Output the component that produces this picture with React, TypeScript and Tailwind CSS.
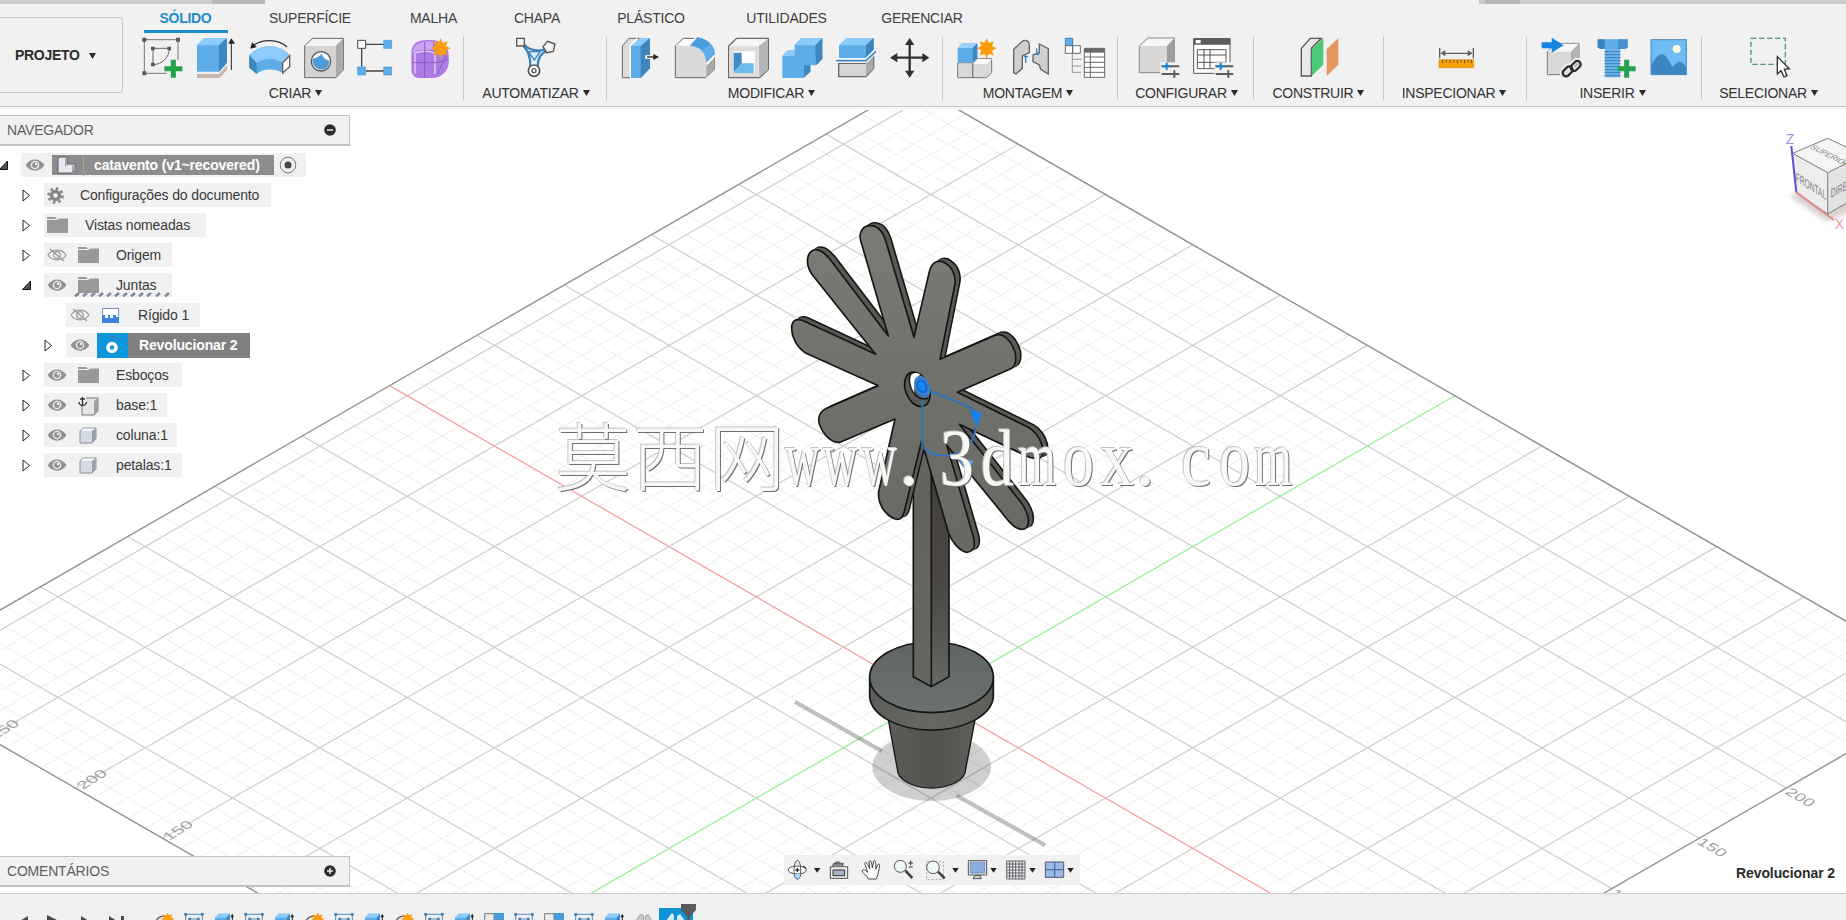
import clsx from "clsx";
import type { ReactNode } from "react";

const BLUE = "#5eade8";
const DARK_BLUE = "#3d86c0";
const GREY = "#686868";

type IconProps = { box: string; className?: string; children: ReactNode };

// Icons are drawn on a 3x grid, so a 54x44 cell is 162x132 units.
function Icon({ box, className = "h-[44px] w-[54px]", children }: IconProps) {
  return (
    <svg className={clsx("shrink-0", className)} fill="none" viewBox={box}>
      {children}
    </svg>
  );
}

function Star({ x, y, r = 30 }: { x: number; y: number; r?: number }) {
  const points = Array.from({ length: 16 }, (_, i) => {
    const radius = i % 2 ? r * 0.58 : r;
    const angle = (i * Math.PI) / 8;
    return `${x + radius * Math.sin(angle)},${y - radius * Math.cos(angle)}`;
  }).join(" ");
  return <polygon fill="#f99d0b" points={points} />;
}

function Plus({ x, y }: { x: number; y: number }) {
  return (
    <path d={`M${x - 27} ${y}H${x + 27}M${x} ${y - 27}V${y + 27}`} stroke="#25a14b" strokeWidth="15" />
  );
}

function Sliders({ x, y }: { x: number; y: number }) {
  return (
    <g transform={`translate(${x} ${y})`}>
      <path d="M-4 -12H56V36H-4z" fill="#f1f1f1" />
      <path d="M0 0H53M0 23H53M38 12V34" stroke="#5d5d5d" strokeWidth="6" />
      <path d="M0 0H28M15 -11V11" stroke="#1e80d0" strokeWidth="6" />
    </g>
  );
}

const createIcons = (
  <>
    <Icon box="399 111 162 132">
      <path d="M433 119H534V180M433 119V220H500" stroke="#777" strokeWidth="3" />
      <path d="M459 145H508C508 172 486 194 459 194z" stroke="#666" strokeWidth="3" />
      <path d="M427 113h12v12h-12zM528 113h12v12h-12zM427 214h12v12h-12zM453 140h11v11h-11zM502 140h11v11h-11zM453 188h11v11h-11z" fill="#62574f" />
      <Plus x={520} y={206} />
    </Icon>
    <Icon box="561 111 162 132">
      <path d="M591 222H657L681 196V210L658 234H591z" fill="#c9b5ab" />
      <path d="M591 136L612 114H681V188L657 215H591z" fill={BLUE} />
      <path d="M591 136L612 114H681L657 136z" fill="#8ccbfb" />
      <path d="M657 136L681 114V188L657 215z" fill={DARK_BLUE} />
      <path d="M694 210V122" stroke="#222" strokeWidth="3" />
      <path d="M685 131L694 115L705 131z" fill="#222" />
    </Icon>
    <Icon box="723 111 162 132">
      <path d="M748 165C780 130 838 130 869 165L848 188V218C820 205 790 205 770 222L748 203z" fill={BLUE} />
      <path d="M748 165C780 130 838 130 869 165L848 188C820 172 795 172 770 190z" fill="#8ccbfb" />
      <path d="M748 165L770 190V222L748 203z" fill={DARK_BLUE} />
      <path d="M848 188L869 167V200L848 219z" fill="#fff" stroke="#6b5a55" strokeWidth="4" />
      <path d="M861 141C835 116 785 116 758 138" stroke="#333" strokeWidth="4" />
      <path d="M751 146L756 127L770 141z" fill="#222" />
    </Icon>
    <Icon box="885 111 162 132">
      <path d="M914 137L938 115H1030V210L1008 233H914z" fill="#d4d4d4" stroke={GREY} strokeWidth="3" />
      <path d="M916 138L939 117H1028L1006 138z" fill="#f4f4f4" />
      <path d="M1008 137L1029 117V210L1008 232z" fill="#aaa" />
      <circle cx="963" cy="184" fill="#fff" r="29" stroke="#555" strokeWidth="4" />
      <path d="M937 177C950 173 962 169 964 160C968 172 976 180 988 182C988 220 937 217 937 177z" fill="#4d9bd8" />
    </Icon>
    <Icon box="1047 111 162 132">
      <path d="M1098 133H1152M1085 146V200M1098 213H1152" stroke="#444" strokeWidth="4" />
      <path d="M1073 121h24v24h-24z" fill="#fff" stroke="#444" strokeWidth="3" />
      <path d="M1151 121h24v24h-24zM1073 201h24v24h-24zM1151 201h24v24h-24z" fill={BLUE} stroke="#4d96cc" strokeWidth="2" />
    </Icon>
    <Icon box="1209 111 162 132">
      <path d="M1234 155C1236 130 1255 119 1285 120C1325 118 1346 140 1346 165V190C1345 212 1325 233 1300 234H1258C1240 234 1234 222 1234 205z" fill="#ad7be4" />
      <path d="M1237 155C1245 130 1265 122 1298 124L1300 150C1275 146 1250 148 1237 160z" fill="#caa5f4" />
      <path d="M1245 222V160C1265 150 1290 152 1305 160V222" stroke="#e3d3f7" strokeWidth="4" />
      <path d="M1274 125V232M1236 188H1310L1346 178M1312 222L1340 165" stroke="#8a5ac2" strokeWidth="3" />
      <Star x={1322} y={145} />
    </Icon>
  </>
);

const automateIcons = (
  <Icon box="144 111 162 132">
    <path d="M190 130C205 152 240 158 262 145M190 138C210 158 212 180 211 200M262 152C240 160 233 180 233 200" stroke="#3b82bb" strokeWidth="7" />
    <path d="M205 155H240L223 180z" fill="#d5eafa" stroke="#3b82bb" strokeWidth="4" />
    <path d="M170 115h23v23h-23zM249 140L263 124L285 132L280 154L260 158z" fill="#f4f4f4" stroke="#555" strokeWidth="4" />
    <circle cx="222" cy="212" fill="#fff" r="17" stroke="#555" strokeWidth="5" />
    <circle cx="222" cy="212" r="6" stroke="#555" strokeWidth="4" />
  </Icon>
);

const modifyIcons = (
  <>
    <Icon box="456 111 162 132">
      <path d="M487 138L507 115H545L515 138V233H487z" fill="#ddd" stroke={GREY} strokeWidth="3" />
      <path d="M509 135L532 112V236H509z" fill="#fff" />
      <path d="M513 138L540 114H570V205L542 234H513z" fill={BLUE} />
      <path d="M513 138L540 114H570L542 138z" fill="#8ccbfb" />
      <path d="M542 138L570 114V205L542 234z" fill={DARK_BLUE} />
      <path d="M556 171H582" stroke="#fff" strokeWidth="11" />
      <path d="M561 171H582" stroke="#222" strokeWidth="4" />
      <path d="M580 162L597 171L580 180z" fill="#222" />
    </Icon>
    <Icon box="618 111 162 132">
      <path d="M646 138L670 115H700L763 170V208L737 233H646z" fill="#dadada" stroke={GREY} strokeWidth="3" />
      <path d="M648 137L671 117H712L690 137z" fill="#fff" />
      <path d="M739 197L763 174V207L739 231z" fill="#aaa" />
      <path d="M690 137L712 112C752 118 768 145 765 168L740 192C738 160 722 139 690 137z" fill={BLUE} />
      <path d="M740 192L765 166" stroke="#fff" strokeWidth="6" />
      <path d="M690 137L712 112C730 115 742 122 750 134L727 150C716 140 704 138 690 137z" fill="#4b9ede" />
    </Icon>
    <Icon box="780 111 162 132">
      <path d="M806 138L830 115H925V208L899 233H806z" fill="#f5f5f5" stroke={GREY} strokeWidth="4" />
      <path d="M896 138L924 117V208L898 232z" fill="#b5b5b5" />
      <path d="M808 139H896V231H808z" fill="#dcdcdc" />
      <path d="M821 154H884V219H821z" fill="#fff" />
      <path d="M821 158H845V190L821 218z" fill="#3f89c4" />
      <path d="M845 190H881V219H821z" fill="#6fbaf0" />
    </Icon>
    <Icon box="942 111 162 132">
      <path d="M967 168L984 151H1004V136L1024 114H1087V177L1068 196H1051V215L1030 234H967z" fill={BLUE} />
      <path d="M1066 136L1087 114V177L1068 196zM1032 196H1051V215L1032 233z" fill={DARK_BLUE} />
      <path d="M1006 136L1024 114H1087L1066 136zM967 168L984 151H1004V168z" fill="#8ccbfb" />
    </Icon>
    <Icon box="1104 111 162 132">
      <path d="M1136 190H1216L1241 166V205L1218 230H1136z" fill="#d7d7d7" stroke={GREY} strokeWidth="4" />
      <path d="M1218 192L1240 168V205L1218 228z" fill="#aaa" />
      <path d="M1137 136L1160 114H1241V150L1218 174H1137z" fill={BLUE} />
      <path d="M1137 136L1160 114H1241L1218 136z" fill="#8ccbfb" />
      <path d="M1218 136L1241 114V150L1218 174z" fill={DARK_BLUE} />
      <path d="M1128 182H1218L1248 152" stroke="#fff" strokeWidth="13" />
      <path d="M1128 182H1218L1248 154" stroke="#3d86c0" strokeWidth="5" />
    </Icon>
    <Icon box="1266 111 162 132">
      <path d="M1300 173H1398M1349 125V222" stroke="#303030" strokeWidth="7" />
      <path d="M1349 114L1363 135H1335zM1349 233L1363 212H1335zM1290 173L1312 159V187zM1408 173L1387 159V187z" fill="#303030" />
    </Icon>
  </>
);

const assemblyIcons = (
  <>
    <Icon box="27 111 162 132">
      <path d="M53 188H98V233H53zM98 193L113 176H155V218L140 233H98z" fill="#d9d9d9" stroke="#777" strokeWidth="3" />
      <path d="M99 192L113 177H155L141 192z" fill="#f7f7f7" />
      <path d="M53 144L66 130H112V175L98 188H53z" fill={BLUE} />
      <path d="M53 144L66 130H112L98 144z" fill="#9bd2fc" />
      <path d="M98 144L112 130V175L98 188z" fill={DARK_BLUE} />
      <Star x={140} y={145} />
    </Icon>
    <Icon box="189 111 162 132">
      <path d="M221 148L248 123C258 118 268 124 268 135V158L247 168V205L228 222L221 218z" fill="#d0d0d0" stroke="#636363" strokeWidth="4" />
      <path d="M298 132L325 146V222L302 208L298 195L279 185V165L298 158z" fill="#d0d0d0" stroke="#636363" strokeWidth="4" />
      <path d="M257 166V188M290 145V163M251 170H264M283 163H297" stroke="#2a87cf" strokeWidth="4" />
    </Icon>
    <Icon box="351 111 162 132">
      <path d="M376 115H398V137H376z" fill={BLUE} stroke="#3c7fb2" strokeWidth="3" />
      <path d="M376 137H398V160H376zM398 137H421V160H398z" fill="#fff" stroke={GREY} strokeWidth="3" />
      <path d="M397 160V218M397 178H424M397 198H424M397 217H424" stroke="#999" strokeWidth="3" />
      <path d="M433 145H494V232H433z" fill="#fff" stroke={GREY} strokeWidth="3" />
      <path d="M433 145H494V158H433z" fill={GREY} />
      <path d="M433 171H494M433 187H494M433 202H494M433 217H494M451 158V232" stroke={GREY} strokeWidth="3" />
    </Icon>
  </>
);

const configureIcons = (
  <>
    <Icon box="574 111 162 132">
      <path d="M599 138L624 114H704V195L682 218H599z" fill="#d7d7d7" stroke="#888" strokeWidth="3" />
      <path d="M601 138L625 116H702L681 138z" fill="#f6f6f6" />
      <path d="M682 138L703 116V195L682 217z" fill="#9f9f9f" />
      <Sliders x={666} y={199} />
    </Icon>
    <Icon box="736 111 162 132">
      <path d="M762 116H871V220H762z" fill="#fff" stroke="#555" strokeWidth="3" />
      <path d="M762 115H872V134H762z" fill="#5b5b5b" />
      <path d="M768 120H783V130H768z" fill="#fff" />
      <path d="M773 149H859V206H773zM773 165H859M773 187H859M793 149V206M811 149V206" stroke="#555" strokeWidth="3" />
      <Sliders x={828} y={199} />
    </Icon>
  </>
);

const constructIcons = (
  <Icon box="1054 111 162 132">
    <path d="M1085 145L1112 115H1145L1115 145V228H1085z" fill="#e9e9e9" stroke="#555" strokeWidth="4" />
    <path d="M1116 148L1151 114V194L1116 228z" fill="#4cc97b" />
    <path d="M1161 148L1196 114V194L1161 228z" fill="#e49560" />
  </Icon>
);

const inspectIcons = (
  <Icon box="173 111 162 132">
    <path d="M206 179H310V203H206z" fill="#f9a30c" stroke="#d88a14" strokeWidth="2" />
    <path d="M217 180V190M228 180V187M239 180V190M250 180V187M261 180V190M272 180V187M283 180V190M294 180V187M303 180V190" stroke="#6b4a10" strokeWidth="3" />
    <path d="M208 144V175M309 144V175M215 160H302" stroke="#606060" strokeWidth="4" />
    <path d="M210 160L225 151V169zM307 160L292 151V169z" fill="#606060" />
  </Icon>
);

const insertIcons = (
  <>
    <Icon box="487 111 162 132">
      <path d="M530 155L558 130H625V200L600 224H530z" fill="#d9d9d9" stroke="#777" strokeWidth="3" />
      <path d="M531 155L558 131H624L600 155z" fill="#f6f6f6" />
      <path d="M601 155L624 132V199L601 222z" fill="#b2b2b2" />
      <path d="M513 127H543V113L579 136L543 158V145H513z" fill="#1584df" />
      <g stroke="#f1f1f1" strokeWidth="15">
        <rect height="22" rx="11" transform="rotate(-45 590 215)" width="36" x="573" y="204" />
        <rect height="22" rx="11" transform="rotate(-45 615 197)" width="36" x="597" y="186" />
      </g>
      <g stroke="#2d2d2d" strokeWidth="7">
        <rect height="20" rx="10" transform="rotate(-45 591 214)" width="34" x="574" y="204" />
        <rect height="20" rx="10" transform="rotate(-45 615 198)" width="34" x="598" y="188" />
      </g>
    </Icon>
    <Icon box="649 111 162 132">
      <path d="M703 145H748V232H703z" fill="#6bb2e8" />
      <path d="M701 155H750M701 164H750M701 173H750M701 182H750M701 191H750M701 200H750M701 209H750M701 218H750M701 227H750" stroke="#3c80b8" strokeWidth="3" />
      <path d="M681 118H771V142L765 147H688L681 142z" fill={BLUE} />
      <path d="M681 118H702V146H688L681 142z" fill="#3c84bd" />
      <path d="M742 118H771V142L765 147H742z" fill="#4590cb" />
      <Plus x={768} y={206} />
    </Icon>
    <Icon box="811 111 162 132">
      <path d="M841 119H947V224H841z" fill="#6fbcf4" stroke="#4a87b5" strokeWidth="3" />
      <path d="M842 195C855 175 862 162 874 163C885 164 892 178 905 200C915 192 922 183 930 186C938 188 942 196 946 201V223H842z" fill="#3b86c3" />
      <circle cx="918" cy="147" fill="#fffce0" r="12" />
    </Icon>
  </>
);

const selectIcons = (
  <Icon box="1114 111 162 132">
    <path d="M1141 115H1244V193H1141z" stroke="#4c9d6c" strokeDasharray="16 8" strokeWidth="4" />
    <path d="M1220 170V222L1231 212L1240 231L1249 227L1241 208L1256 206z" fill="#fff" stroke="#333" strokeWidth="4" />
  </Icon>
);

const tabs = [
  { name: "SÓLIDO", width: "w-[84px]", active: true },
  { name: "SUPERFÍCIE", width: "w-[164px]" },
  { name: "MALHA", width: "w-[83px]" },
  { name: "CHAPA", width: "w-[124px]" },
  { name: "PLÁSTICO", width: "w-[104px]" },
  { name: "UTILIDADES", width: "w-[167px]" },
  { name: "GERENCIAR", width: "w-[104px]" },
];

const groups = [
  { name: "CRIAR", width: "w-[336px]", icons: createIcons },
  { name: "AUTOMATIZAR", width: "w-[143px]", icons: automateIcons, label: "pl-[2px]" },
  { name: "MODIFICAR", width: "w-[336px]", icons: modifyIcons, label: "pr-[6px]" },
  { name: "MONTAGEM", width: "w-[175px]", icons: assemblyIcons, label: "pr-[4px]" },
  { name: "CONFIGURAR", width: "w-[136px]", icons: configureIcons, label: "pl-[2px]" },
  { name: "CONSTRUIR", width: "w-[130px]", icons: constructIcons },
  { name: "INSPECIONAR", width: "w-[143px]", icons: inspectIcons, label: "pr-[2px]" },
  { name: "INSERIR", width: "w-[175px]", icons: insertIcons, label: "pr-[3px]" },
  { name: "SELECIONAR", width: "w-[135px]", icons: selectIcons, label: "pr-[2px]" },
];

function Caret({ className }: { className?: string }) {
  return (
    <svg className={clsx("h-[6px] w-[7px]", className)} viewBox="0 0 7 6">
      <path d="M0 0H7L3.5 6z" fill="#2b2b2b" />
    </svg>
  );
}

function Toolbar() {
  return (
    <header className="h-[110px] shrink-0 border-[#f7f7f7] border-b-[3px] bg-[#f1f1f1]">
      <div className="flex h-[4px] justify-between">
        <div className="flex w-[265px] bg-[#cbcbcb]">
          <div className="ml-auto w-[53px] bg-[#b9b9b9]" />
        </div>
        <div className="w-[367px] bg-[#cbcbcb] pl-[6px]">
          <div className="h-full w-[35px] bg-[#b9b9b9]" />
        </div>
      </div>
      <div className="flex h-[103px] border-[#c6c6c6] border-b">
        <button
          className="mt-[13px] flex h-[76px] w-[123px] shrink-0 items-center rounded-r-[4px] border border-[#c9c9c9] border-l-0 pl-[15px] font-bold text-[#2c2c2c] text-[14px] tracking-[-0.3px]"
          type="button"
        >
          PROJETO
          <Caret className="mt-px ml-[9px]" />
        </button>
        <div className="flex flex-col">
          <nav className="ml-[21px] flex h-[29px]">
            {tabs.map((tab) => (
              <div
                className={clsx(
                  "flex h-[29px] items-center justify-center whitespace-nowrap text-[14px]",
                  tab.width,
                  tab.active
                    ? "border-[#1f8ccb] border-b-[3px] pt-[2px] pr-px font-bold text-[#1f8ccb] tracking-[-0.3px]"
                    : "pb-[1px] text-[#404040] tracking-[-0.2px]"
                )}
                key={tab.name}
              >
                {tab.name}
              </div>
            ))}
          </nav>
          <div className="ml-[5px] flex pt-[4px]">
            {groups.map((group, i) => (
              <div
                className={clsx(
                  "flex h-[63px] flex-col items-center",
                  group.width,
                  i < groups.length - 1 && "border-[#c8c8c8] border-r"
                )}
                key={group.name}
              >
                <div className="flex justify-center pr-px">{group.icons}</div>
                <div
                  className={clsx(
                    "mt-[2px] flex h-[20px] shrink-0 items-center text-[#333] text-[14px] tracking-[-0.25px]",
                    group.label
                  )}
                >
                  {group.name}
                  <Caret className="ml-[4px]" />
                </div>
              </div>
            ))}
          </div>
        </div>
      </div>
    </header>
  );
}

function Eye({ off }: { off?: boolean }) {
  return (
    <svg className="h-[14px] w-[20px] shrink-0" fill="none" viewBox="0 0 20 14">
      {off ? (
        <>
          <path d="M1 7C5 0.5 15 0.5 19 7C15 13.500 5 13.500 1 7z" stroke="#9a9a9a" strokeWidth="1.200" />
          <circle cx="10" cy="7" r="3.300" stroke="#9a9a9a" strokeWidth="1.200" />
          <path d="M3 1L17 13" stroke="#9a9a9a" strokeWidth="1.300" />
        </>
      ) : (
        <>
          <path d="M0.500 7C5 -0.500 15 -0.500 19.500 7C15 14.500 5 14.500 0.500 7z" fill="#929292" />
          <circle cx="10" cy="7" fill="#929292" r="3.600" stroke="#eee" strokeWidth="1.400" />
          <circle cx="11" cy="6" fill="#eee" r="1.200" />
        </>
      )}
    </svg>
  );
}

function Folder() {
  return (
    <svg className="h-[16px] w-[21px] shrink-0" viewBox="0 0 21 16">
      <path d="M0 0H8L10 2H0zM0 3H10L12 1.500H21V16H0z" fill="#999" />
    </svg>
  );
}

function Body() {
  return (
    <svg className="h-[17px] w-[18px] shrink-0" viewBox="0 0 18 17">
      <path d="M1 4L4 1H17V12L13 16H1z" fill="#d3dae2" stroke="#8b8f95" />
      <path d="M1.500 4L4 1.500H16.500L13 4z" fill="#f3f6f9" />
      <path d="M13 4L16.500 1.500V12L13 15.500z" fill="#9aa0a8" />
    </svg>
  );
}

function Expander({ open }: { open?: boolean }) {
  return (
    <svg className="h-[13px] w-[9px] shrink-0" fill="none" viewBox="0 0 9 13">
      {open ? (
        <path d="M8.500 2V10.500H0.500z" fill="#555" stroke="#111" />
      ) : (
        <path d="M1 1L7.500 6.500L1 12z" fill="#fff" stroke="#222" />
      )}
    </svg>
  );
}

type RowProps = {
  indent: string;
  width: string;
  open?: boolean;
  leaf?: boolean;
  children: ReactNode;
};

function Row({ indent, width, open, leaf, children }: RowProps) {
  return (
    <div className={clsx("flex h-[24px] items-center", indent)}>
      <div className="w-[22px] shrink-0">{!leaf && <Expander open={open} />}</div>
      <div className={clsx("flex h-[24px] items-center whitespace-nowrap bg-[#f1f1f1]", width)}>
        {children}
      </div>
    </div>
  );
}

function PanelHeader({ title, plus }: { title: string; plus?: boolean }) {
  return (
    <div className="flex h-[31px] w-[350px] items-center justify-between border border-[#c4c4c4] border-b-2 border-l-0 bg-[#f1f1f1] pr-[13px] pl-[7px] text-[#5f5f5f] text-[14px] tracking-[-0.2px]">
      {title}
      <svg className="h-[12px] w-[12px]" viewBox="0 0 12 12">
        <circle cx="6" cy="6" fill="#2d2d2d" r="5.800" />
        <path d={plus ? "M3 6H9M6 3V9" : "M3 6H9"} stroke="#eee" strokeWidth="1.500" />
      </svg>
    </div>
  );
}

function Navigator() {
  return (
    <div className="text-[#3a3a3a] text-[14px] tracking-[-0.14px]">
      <PanelHeader title="NAVEGADOR" />
      <div className="mt-[7px] flex flex-col gap-[6px]">
        <Row indent="-ml-px" open width="w-[285px]">
          <div className="flex w-[31px] justify-center pr-[3px]">
            <Eye />
          </div>
          <div className="flex h-[20px] w-[222px] items-center bg-[#8d8d8d] font-bold text-white">
            <svg className="mr-[7px] ml-[5px] h-[18px] w-[19px]" viewBox="0 0 19 18">
              <path d="M1 3L3 1H10V8H18V14L15 17H1z" fill="#e6eaf0" stroke="#5e5e62" />
              <path d="M8 3L10 1V9L8 11zM15 10L18 8V14L15 17z" fill="#a3a7ad" />
            </svg>
            <span className="border-[#a3a3a3] border-l pl-[10px] tracking-[-0.15px]">
              catavento (v1~recovered)
            </span>
          </div>
          <svg className="ml-[5px] h-[18px] w-[18px]" fill="none" viewBox="0 0 18 18">
            <circle cx="9" cy="9" fill="#f0f0f0" r="7.800" stroke="#777" />
            <circle cx="9" cy="9" fill="#444" r="3.500" />
          </svg>
        </Row>
        <Row indent="ml-[22px]" width="w-[227px]">
          <svg className="ml-[3px] h-[17px] w-[17px]" fill="none" viewBox="0 0 17 17">
            <circle cx="8.500" cy="8.500" r="4" stroke="#858585" strokeWidth="3.400" />
            <circle cx="8.500" cy="8.500" r="7" stroke="#858585" strokeDasharray="2.700 2.800" strokeWidth="2.600" />
          </svg>
          <span className="ml-[16px]">Configurações do documento</span>
        </Row>
        <Row indent="ml-[22px]" width="w-[162px]">
          <div className="ml-[3px]">
            <Folder />
          </div>
          <span className="ml-[17px]">Vistas nomeadas</span>
        </Row>
        <Row indent="ml-[22px]" width="w-[128px]">
          <div className="mr-[11px] ml-[3px]">
            <Eye off />
          </div>
          <Folder />
          <span className="ml-[17px]">Origem</span>
        </Row>
        <Row indent="ml-[22px]" open width="w-[128px] relative">
          <div className="mr-[11px] ml-[3px]">
            <Eye />
          </div>
          <Folder />
          <span className="ml-[17px]">Juntas</span>
          <svg className="absolute bottom-0 left-[30px] h-[5px] w-[97px]" viewBox="0 0 97 5">
            <path
              d="M1 4.500L5 1M9 4.500L13 1M17 4.500L21 1M25 4.500L29 1M33 4.500L37 1M41 4.500L45 1M49 4.500L53 1M57 4.500L61 1M65 4.500L69 1M73 4.500L77 1M82 4.500L86 1M91 4.500L95 1"
              stroke="#81899c"
              strokeWidth="2.600"
            />
          </svg>
        </Row>
        <Row indent="ml-[44px]" leaf width="w-[134px]">
          <div className="mr-[12px] ml-[4px]">
            <Eye off />
          </div>
          <svg className="h-[15px] w-[17px]" viewBox="0 0 17 15">
            <path d="M0.500 0.500H16.500V14.500H0.500z" fill="#fff" stroke="#7591b8" />
            <path d="M0 15V7H3V10H6V7H8V10H11V7H14V9H17V15z" fill="#3d83e0" />
          </svg>
          <span className="ml-[19px]">Rígido 1</span>
        </Row>
        <Row indent="ml-[44px]" width="w-[184px]">
          <div className="mr-[7px] ml-[4px]">
            <Eye />
          </div>
          <div className="flex h-[25px] w-[153px] items-center bg-[#808080] font-bold text-white">
            <div className="flex h-full w-[31px] items-center justify-center bg-[#0d96dc]">
              <svg className="h-[18px] w-[14px]" fill="none" viewBox="0 0 14 18">
                <circle cx="6" cy="11.500" r="4" stroke="#fff" strokeWidth="3.600" />
                <path d="M4 4L7 1L11 3" stroke="#4d78b5" strokeWidth="1.500" />
              </svg>
            </div>
            <span className="ml-[11px]">Revolucionar 2</span>
          </div>
        </Row>
        <Row indent="ml-[22px]" width="w-[138px]">
          <div className="mr-[11px] ml-[3px]">
            <Eye />
          </div>
          <Folder />
          <span className="ml-[17px]">Esboços</span>
        </Row>
        <Row indent="ml-[22px]" width="w-[123px]">
          <div className="mr-[11px] ml-[3px]">
            <Eye />
          </div>
          <svg className="h-[21px] w-[21px]" fill="none" viewBox="0 0 21 21">
            <path d="M4 6L7 3H20V16L16 20H4z" fill="#e6e6e6" stroke="#777" />
            <path d="M16 6L20 3V16L16 20z" fill="#a2a2a2" />
            <path d="M0 0H8V11H0z" fill="#f1f1f1" />
            <path d="M4.500 2V10M2 4H7M1 7C1.500 10 3 10.500 4.500 10.500C6 10.500 8 10 8.500 7" stroke="#333" strokeWidth="1.400" />
          </svg>
          <span className="ml-[17px]">base:1</span>
        </Row>
        {["coluna:1", "petalas:1"].map((name) => (
          <Row indent="ml-[22px]" key={name} width={name === "coluna:1" ? "w-[133px]" : "w-[138px]"}>
            <div className="mr-[12px] ml-[3px]">
              <Eye />
            </div>
            <Body />
            <span className="ml-[19px]">{name}</span>
          </Row>
        ))}
      </div>
    </div>
  );
}

// Ground plane: one major cell spans (87.3, 50.3) along each axis.
const ORIGIN = { x: 930.9, y: 697.5 };
const I_MIN = -5.8;
const I_MAX = 6;
const J_MIN = -6.2;
const J_MAX = 5.8;

function point(i: number, j: number) {
  return `${(ORIGIN.x + (i + j) * 87.3).toFixed(1)} ${(ORIGIN.y + (j - i) * 50.3).toFixed(1)}`;
}

function gridLines(major: boolean) {
  let d = "";
  for (let k = -31; k <= 30; k++) {
    if ((k % 5 === 0) !== major || k === 0) {
      continue;
    }
    const v = k / 5;
    if (v >= I_MIN && v <= I_MAX) {
      d += `M${point(v, J_MIN)}L${point(v, J_MAX)}`;
    }
    if (v >= J_MIN && v <= J_MAX) {
      d += `M${point(I_MIN, v)}L${point(I_MAX, v)}`;
    }
  }
  return d;
}

function Grid() {
  return (
    <g fill="none">
      <path d={gridLines(false)} stroke="#eeeeee" />
      <path d={gridLines(true)} stroke="#d0d0d0" strokeWidth="1.300" />
      <path d={`M${point(0, J_MIN)}L${point(0, J_MAX)}`} stroke="#f6a0a0" strokeWidth="1.300" />
      <path d={`M${point(I_MIN, 0)}L${point(I_MAX, 0)}`} stroke="#9af09a" strokeWidth="1.300" />
      <path
        d={`M${point(I_MIN, J_MIN)}L${point(I_MAX, J_MIN)}L${point(I_MAX, J_MAX)}L${point(I_MIN, J_MAX)}Z`}
        stroke="#949494"
        strokeWidth="1.400"
      />
      <g fill="#a0a0a0" fontSize="19">
        <text transform="matrix(.8 -.5 .6 .42 -5 740)">250</text>
        <text transform="matrix(.8 -.5 .6 .42 83 790)">200</text>
        <text transform="matrix(.8 -.5 .6 .42 169 841)">150</text>
        <text transform="matrix(.8 .46 -.55 .45 1784 793)">200</text>
        <text transform="matrix(.8 .46 -.55 .45 1696 843)">150</text>
        <text transform="matrix(.8 .46 -.55 .45 1609 894)">100</text>
      </g>
    </g>
  );
}

const VANE =
  "M385 408L303 125C293 93 312 75 335 77C358 80 372 102 380 132L462 412L508 215C515 183 540 175 560 192C580 205 590 235 583 262L540 478L708 405C735 398 757 430 766 460C770 485 765 500 752 506L592 577L805 682C835 700 852 735 848 765C842 778 825 778 808 772L598 673L785 910C805 940 810 965 800 983C785 995 765 985 745 962L560 735L640 1010C648 1040 640 1055 620 1057C598 1052 575 1025 566 1000L485 722L434 930C428 958 418 960 405 957C375 945 352 910 356 875L405 657L240 727C215 730 190 705 178 672C172 650 182 633 200 625L355 557L135 458C110 440 93 410 95 380C98 358 112 355 130 362L347 463L155 222C135 190 140 160 160 150C178 145 192 158 210 178z";

function Model() {
  return (
    <>
      <g transform="translate(760 560) scale(.33333)">
        <ellipse cx="515" cy="620" fill="#000" opacity=".19" rx="178" ry="103" />
        <path d="M105 426L365 573M590 707L855 856" opacity=".24" stroke="#000" strokeWidth="12" />
        <path d="M385 480L412 627A102 57 0 0 0 617 627L645 480z" fill="url(#pot)" stroke="#151515" strokeWidth="4" />
        <path d="M329 352V412A186 106 0 0 0 700 412V352z" fill="url(#rim)" stroke="#151515" strokeWidth="5" />
        <ellipse cx="514.500" cy="352" fill="url(#top)" rx="185.500" ry="106" stroke="#151515" strokeWidth="5" />
        <path d="M460 -350H514V380L460 350z" fill="url(#colLeft)" />
        <path d="M514 -350H567V350L514 380z" fill="url(#colRight)" />
        <path d="M460 -350V350L514 380L567 350V-350M514 -350V380" fill="none" stroke="#151515" strokeWidth="5" />
      </g>
      <g strokeLinejoin="round" transform="translate(760 200) scale(.33333)">
        <path d={VANE} fill="#5a5953" stroke="#151515" strokeWidth="5" transform="translate(15 -8)" />
        {[12, 9, 6, 3].map((shift) => (
          <path d={VANE} fill="#5a5953" key={shift} transform={`translate(${shift} ${-shift / 2})`} />
        ))}
        <path d={VANE} fill="url(#vane)" stroke="#151515" strokeWidth="5" />
        <ellipse cx="472" cy="568" fill="#5a5953" rx="35" ry="54" stroke="#111" strokeWidth="5" transform="rotate(-22 472 568)" />
        <path d="M452 530C456 518 470 516 480 523L464 545L462 582C450 565 448 548 452 530z" fill="#fff" />
        <path d="M450 520C442 560 465 605 505 595" fill="none" stroke="#111" strokeWidth="4" />
        <ellipse cx="487" cy="560" fill="#3a7fc9" rx="23" ry="34" transform="rotate(-22 487 560)" />
        <ellipse cx="486" cy="559" fill="#1c86f2" rx="13" ry="18" stroke="#0b66cf" strokeWidth="5" transform="rotate(-22 486 559)" />
        <g fill="none" stroke="#2f74b8" strokeWidth="6">
          <path d="M487 600V740C515 775 570 770 600 757" />
          <path d="M512 573L640 626M647 680C645 715 630 740 600 757" />
        </g>
        <path d="M628 628L664 638L650 682z" fill="#0f80f5" />
        <path d="M592 775L640 782L625 822z" fill="#5a9fe0" />
      </g>
    </>
  );
}

// One entry per glyph: character, left edge and drawn width.
const watermark: [string, number, number][] = [
  ["莫", 555, 76],
  ["西", 632, 76],
  ["网", 709, 76],
  ["w", 785, 35],
  ["w", 823, 35],
  ["w", 862, 35],
  [".", 899, 20],
  ["3", 940, 34],
  ["d", 981, 33],
  ["m", 1018, 38],
  ["o", 1063, 31],
  ["x", 1100, 34],
  [".", 1135, 20],
  ["c", 1181, 30],
  ["o", 1219, 31],
  ["m", 1254, 38],
];

function Watermark() {
  return (
    <text
      className="[filter:drop-shadow(1px_1px_0_#6f6f6f)_drop-shadow(-0.5px_-0.5px_0_#c4c4c4)]"
      fill="#f8f8f6"
      fontFamily="'Liberation Serif', 'Noto Sans CJK SC', serif"
    >
      {watermark.map(([char, x, width]) => (
        <tspan
          fontSize={width === 76 ? 74 : 80}
          fontWeight={width === 76 ? 300 : 400}
          key={x}
          lengthAdjust="spacingAndGlyphs"
          textLength={width}
          x={x}
          y="485"
        >
          {char}
        </tspan>
      ))}
    </text>
  );
}

function ViewCube() {
  return (
    <g transform="translate(1370 0) scale(.33333)">
      <path d="M1255 585L1370 665L1440 635V560z" fill="#c9bcbc" filter="url(#soft)" opacity=".7" />
      <path d="M1268 460L1373 415L1480 465L1373 518z" fill="#f5f5f5" />
      <path d="M1268 460L1373 518V642L1278 577z" fill="#ededed" />
      <path d="M1373 518L1480 465V580L1373 642z" fill="#e3e3e3" />
      <path d="M1268 460L1373 415L1480 465L1373 518zM1373 518V642L1278 577M1373 642L1480 580" fill="none" stroke="#7c7c7c" strokeWidth="3" />
      <path d="M1264 438L1279 577" stroke="#5a4fd6" strokeWidth="6" />
      <path d="M1279 577L1392 660" stroke="#e38a8a" strokeWidth="6" />
      <g fill="#808080" fontSize="27">
        <text transform="matrix(.8 .4 -.8 .55 1318 444)">SUPERIOR</text>
        <text transform="matrix(.74 .46 0 1.400 1277 543)">FRONTAL</text>
        <text transform="matrix(.78 -.4 0 1.400 1382 594)">DIREITA</text>
      </g>
      <text fill="#9890ea" fontSize="42" x="1247" y="431">Z</text>
      <text fill="#f09a9a" fontSize="42" x="1394" y="686">X</text>
    </g>
  );
}

function Scene() {
  return (
    <svg className="absolute inset-0 h-[783px] w-[1846px]" viewBox="0 110 1846 783">
      <defs>
        <linearGradient id="vane" x2="0" y2="1">
          <stop stopColor="#7a7b75" />
          <stop offset="1" stopColor="#686762" />
        </linearGradient>
        <linearGradient id="pot">
          <stop stopColor="#5c5d58" />
          <stop offset=".5" stopColor="#53534d" />
          <stop offset="1" stopColor="#5d5e59" />
        </linearGradient>
        <linearGradient id="rim">
          <stop stopColor="#5c5e59" />
          <stop offset=".5" stopColor="#666862" />
          <stop offset="1" stopColor="#5c5e59" />
        </linearGradient>
        <linearGradient id="top" x2="0" y2="1">
          <stop stopColor="#5f6561" />
          <stop offset="1" stopColor="#6b716d" />
        </linearGradient>
        <linearGradient id="colLeft" x2="0" y2="1">
          <stop stopColor="#63625c" />
          <stop offset="1" stopColor="#646761" />
        </linearGradient>
        <linearGradient id="colRight" x2="0" y2="1">
          <stop stopColor="#423d3a" />
          <stop offset=".6" stopColor="#4b4842" />
          <stop offset="1" stopColor="#646863" />
        </linearGradient>
        <filter id="soft">
          <feGaussianBlur stdDeviation="8" />
        </filter>
      </defs>
      <Grid />
      <Model />
      <Watermark />
      <ViewCube />
    </svg>
  );
}

const down = (x: number) => <path d={`M${x} 84H${x + 19}L${x + 9.5} 98z`} fill="#222" />;

function ViewBar() {
  return (
    <div className="absolute top-[745px] left-[784px] flex h-[30px] bg-[#f1f1f1]">
      <Icon box="72 45 120 90" className="h-[30px] w-[40px]">
        <ellipse cx="112" cy="90" fill="#fff" rx="27" ry="12" stroke="#555" strokeWidth="3" />
        <ellipse cx="112" cy="89" rx="10" ry="28" stroke="#555" strokeWidth="3" />
        <path d="M103 102C103 122 122 122 122 102" fill="#b9d5ef" stroke="#3b6fa5" strokeWidth="3" />
        <path d="M106 90H118M112 84V96M130 78L138 86" stroke="#333" strokeWidth="4" />
        {down(162)}
      </Icon>
      <Icon box="192 45 93 90" className="h-[30px] w-[31px]">
        <path d="M211 80H263V115H211z" fill="#e9e9e9" stroke="#555" strokeWidth="3" />
        <path d="M219 90H254V107H219z" fill="#a7b3cc" stroke="#333" strokeWidth="3" />
        <path d="M217 80L221 70H250L247 80M227 70V66H240" fill="#888" stroke="#555" strokeWidth="3" />
      </Icon>
      <Icon box="285 45 96 90" className="h-[30px] w-[32px]">
        <path
          d="M325 117C320 105 308 100 306 92C309 86 318 92 323 97L314 70C317 64 322 68 329 86L327 64C330 59 334 60 337 84L341 63C345 59 349 63 347 87L354 73C359 70 361 74 355 96C354 108 350 110 349 117z"
          fill="#fff"
          stroke="#444"
          strokeWidth="3"
        />
      </Icon>
      <Icon box="381 45 99 90" className="h-[30px] w-[33px]">
        <path d="M436 92L457 114" stroke="#444" strokeWidth="8" />
        <circle cx="421" cy="79" fill="#eef6f6" r="18" stroke="#555" strokeWidth="3" />
        <path d="M445 69H459M452 62V76M446 81H458" stroke="#333" strokeWidth="3" />
      </Icon>
      <Icon box="480 45 129 90" className="h-[30px] w-[43px]">
        <path d="M500 65H550V118H500z" stroke="#888" strokeDasharray="7 5" strokeWidth="2" />
        <path d="M534 95L554 115" stroke="#444" strokeWidth="8" />
        <circle cx="519" cy="82" fill="#eef6f6" r="19" stroke="#555" strokeWidth="3" />
        {down(577)}
      </Icon>
      <Icon box="609 45 114 90" className="h-[30px] w-[38px]">
        <path d="M625 62H680V105H625z" fill="#e8e8e8" stroke="#555" strokeWidth="3" />
        <path d="M631 67H674V99H631z" fill="#8aaee0" stroke="#5b7eb0" strokeWidth="2" />
        <path d="M645 106H660L664 116H639z" fill="#ccc" stroke="#555" strokeWidth="3" />
        {down(691)}
      </Icon>
      <Icon box="723 45 117 90" className="h-[30px] w-[39px]">
        <path d="M740 63H795V117H740zM749 63V117M758 63V117M767 63V117M777 63V117M786 63V117M740 72H795M740 81H795M740 90H795M740 99H795M740 108H795" stroke="#4c4c55" strokeWidth="2.500" />
        {down(808)}
      </Icon>
      <Icon box="840 45 120 90" className="h-[30px] w-[40px]">
        <path d="M856 66H911V112H856z" fill="#9dbbe6" stroke="#4f5c72" strokeWidth="3" />
        <path d="M884 66V112M856 89H911" stroke="#4f6f9f" strokeWidth="4" />
        {down(922)}
      </Icon>
    </div>
  );
}

type Feature = "component" | "sketch" | "extrude" | "plane" | "joint";

const timeline: Feature[] = [
  "component",
  "sketch",
  "extrude",
  "sketch",
  "extrude",
  "component",
  "sketch",
  "extrude",
  "component",
  "sketch",
  "extrude",
  "plane",
  "sketch",
  "plane",
  "sketch",
  "extrude",
  "joint",
];

function FeatureIcon({ type }: { type: Feature }) {
  return (
    <svg className="h-[20px] w-[20px]" fill="none" viewBox="0 0 60 60">
      {type === "component" && (
        <>
          <path d="M3 32C8 10 28 5 40 14M3 32V60" stroke="#555" strokeWidth="4" />
          <Star r={20} x={41} y={18} />
        </>
      )}
      {type === "sketch" && (
        <>
          <path d="M5 4H55V60M5 4V60M17 18H43V40H17z" stroke="#5d8db5" strokeWidth="3" />
          <path d="M1 0h8v8h-8zM51 0h8v8h-8zM13 14h8v8h-8zM39 14h8v8h-8z" fill="#3d7fb5" />
        </>
      )}
      {type === "extrude" && (
        <>
          <path d="M3 14L14 2H48V46L38 58H3z" fill={BLUE} />
          <path d="M3 14L14 2H48L38 14z" fill="#8ccbfb" />
          <path d="M38 14L48 2V46L38 58z" fill={DARK_BLUE} />
          <path d="M55 44V6" stroke="#222" strokeWidth="3" />
          <path d="M49 13L55 2L60 13z" fill="#222" />
        </>
      )}
      {type === "plane" && (
        <>
          <path d="M2 2H30V60H2z" fill="#e9edf0" stroke="#777" strokeWidth="3" />
          <path d="M30 0H60V60H30z" fill="#4c9bdb" />
        </>
      )}
      {type === "joint" && (
        <path d="M3 28L18 6C23 2 28 5 28 12V60M34 60V10L42 5L56 28V60" fill="#ccc" stroke="#999" strokeWidth="3" />
      )}
    </svg>
  );
}

function Timeline() {
  return (
    <footer className="flex h-[27px] shrink-0 items-start overflow-hidden border-[#cfcfcf] border-t bg-[#f0f0f0]">
      <svg className="h-[26px] w-[154px] shrink-0" fill="#4a4a4a" viewBox="0 0 154 26">
        <path d="M28 22V34L18 28zM47 21L63 29L47 37zM81 22L92 29L81 36zM109 22L120 29L109 36zM121 22H124V36H121z" />
      </svg>
      <div className="flex gap-[10px] pt-[19px]">
        {timeline.map((type, i) => (
          <FeatureIcon key={`${type}-${i}`} type={type} />
        ))}
      </div>
      <svg className="mt-[10px] ml-[5px] h-[26px] w-[38px] shrink-0" viewBox="0 0 38 26">
        <path d="M0 4H34V26H0z" fill="#0d93d8" />
        <path d="M7 17L12 10C14 9 15 10 15 12V26H7zM18 26V12L21 10L26 17V26z" fill="#d8ecf8" />
        <path d="M22 0H37V6L31 12V26H28V12L22 6z" fill="#5a5a5a" />
      </svg>
    </footer>
  );
}

export default function App() {
  return (
    <div className="flex h-[920px] w-[1846px] flex-col overflow-hidden bg-white font-['Liberation_Sans',Arial,sans-serif]">
      <Toolbar />
      <main className="relative flex flex-1 flex-col justify-between overflow-hidden">
        <Scene />
        <div className="relative pt-[5px]">
          <Navigator />
        </div>
        <div className="relative flex items-end justify-between pb-[6px]">
          <PanelHeader plus title="COMENTÁRIOS" />
          <div className="mr-[11px] mb-[3px] font-bold text-[#2b2b2b] text-[14px] tracking-[-0.1px]">
            Revolucionar 2
          </div>
        </div>
        <ViewBar />
      </main>
      <Timeline />
    </div>
  );
}
